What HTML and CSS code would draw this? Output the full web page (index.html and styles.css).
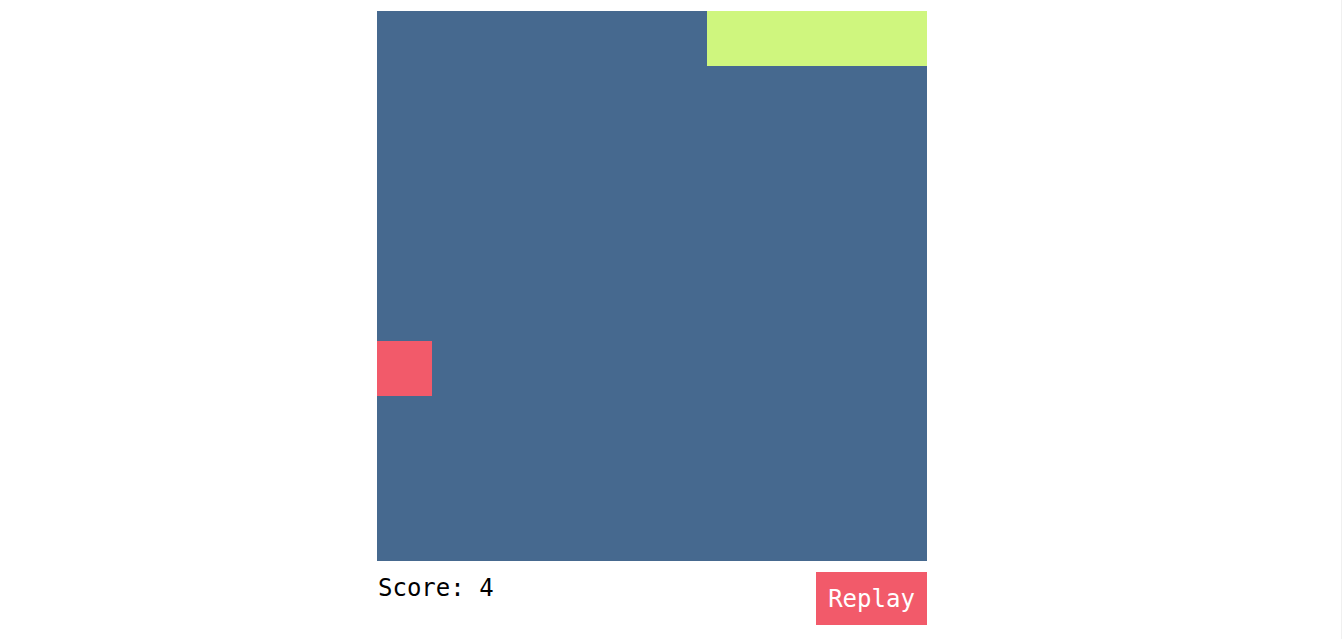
FILE: index.html
```
<!DOCTYPE html>
<html>
<head>
<meta charset="utf-8">
<link rel="stylesheet" href="styles.css">
</head>
<body>
<div class="page">
  <div class="game">
    <div class="board">
      <div class="cell food" style="grid-column: 7 / span 4; grid-row: 1;"></div>
      <div class="cell snake" style="grid-column: 1; grid-row: 7;"></div>
    </div>
    <div class="footer">
      <div class="score">Score: 4</div>
      <button class="replay">Replay</button>
    </div>
  </div>
</div>
</body>
</html>
```
FILE: styles.css
```
html, body {
  margin: 0;
  padding: 0;
  background: #ffffff;
}
.page {
  height: 639px;
  box-sizing: border-box;
  border-right: 1px solid #f0f0f0;
  width: 1342px;
}
.game {
  width: 550px;
  margin-left: 377px;
  padding-top: 11px;
}
.board {
  width: 550px;
  height: 550px;
  background: #46698f;
  display: grid;
  grid-template-columns: repeat(10, 55px);
  grid-template-rows: repeat(10, 55px);
}
.food {
  background: #cff67e;
}
.snake {
  background: #f25a6a;
}
.footer {
  display: flex;
  justify-content: space-between;
  align-items: flex-start;
}
.score {
  font-family: "DejaVu Sans Mono", monospace;
  font-size: 24px;
  color: #000;
  padding-top: 13px;
  padding-left: 1px;
  line-height: 28px;
}
.replay {
  margin-top: 11px;
  width: 111px;
  height: 53px;
  border: none;
  background: #f25a6a;
  color: #fff;
  font-family: "DejaVu Sans Mono", monospace;
  font-size: 24px;
  padding: 0;
}
```
